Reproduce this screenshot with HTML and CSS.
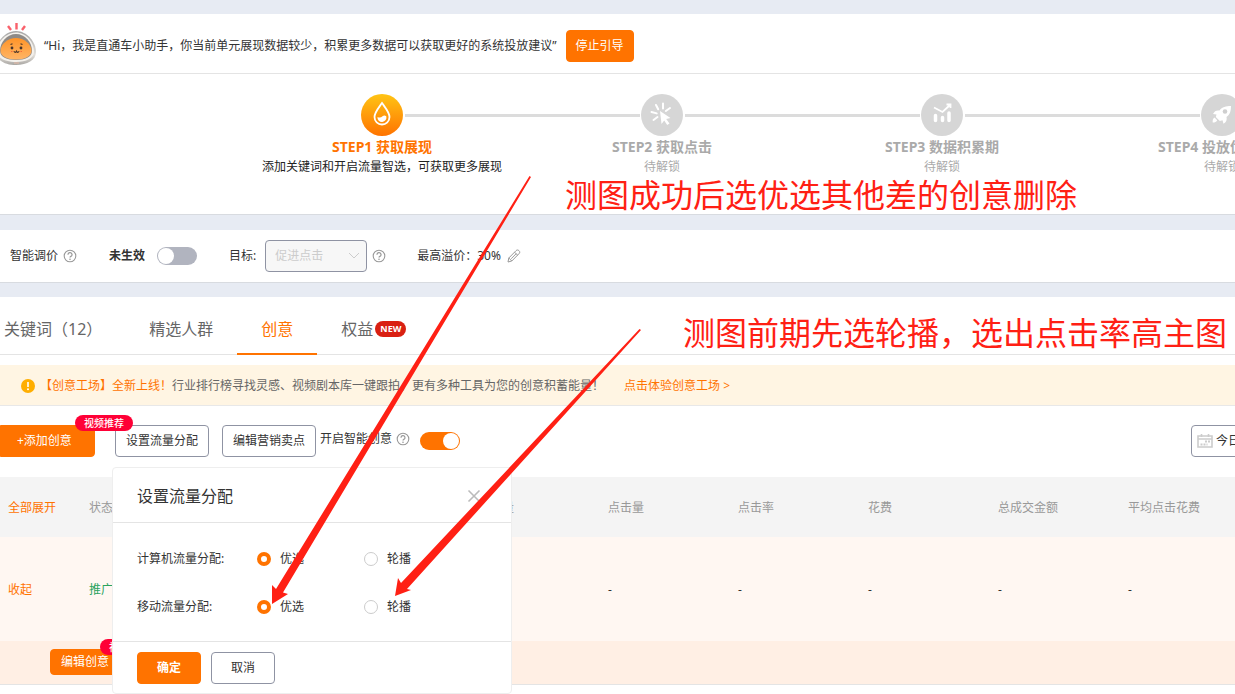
FILE: index.html
```
<!DOCTYPE html>
<html lang="zh-CN">
<head>
<meta charset="utf-8">
<title>创意 - 直通车</title>
<link rel="stylesheet" href="styles.css">
</head>
<body>
<svg class="symbols" aria-hidden="true">
  <symbol id="help" viewBox="0 0 14 14">
    <circle cx="7" cy="7" r="5.8" fill="none" stroke="currentColor" stroke-width="1.1"/>
    <path d="M5 5.7a2 2 0 1 1 2.9 1.7c-.6.3-.9.6-.9 1.2" fill="none" stroke="currentColor" stroke-width="1.2"/>
    <circle cx="7" cy="10.2" r=".8" fill="currentColor"/>
  </symbol>
</svg>
<main class="page">
  <section class="card">
    <div class="helper">
      <svg class="mascot" viewBox="0 0 36 44" aria-hidden="true">
        <defs>
          <linearGradient id="shell" x1="0" y1="0" x2="0" y2="1"><stop offset="0" stop-color="#a5a5a5"/><stop offset=".7" stop-color="#e4e0da"/><stop offset="1" stop-color="#aaa8a4"/></linearGradient>
          <linearGradient id="face" x1="0" y1="0" x2="0" y2="1"><stop offset="0" stop-color="#ff9428"/><stop offset="1" stop-color="#ffb566"/></linearGradient>
        </defs>
        <path d="M8 4l3 4M16.500 1v6.500M25 4l-3 4" stroke="#f9616b" stroke-width="2.400" fill="none"/>
        <path d="M16 9C27 9 36 20 36 30c0 8-9 13-20 13S-4 38-4 30C-4 20 5 9 16 9z" fill="url(#shell)"/>
        <path d="M16 10.500C26 10.500 34 20 34 30c0 6-8 10-18 10S-3 36-3 30c0-10 9-19.500 19-19.500z" fill="#f4f1ec"/>
        <path d="M16 12c9 0 16 8 16 17 0 6-7 9-16 9S0 35 0 29c0-9 7-17 16-17z" fill="#8e8a87"/>
        <path d="M16 16c8 0 15.500 6 15.500 13 0 5-7 8.500-15.500 8.500S.5 34 .5 29C.5 22 8 16 16 16z" fill="url(#face)"/>
        <g fill="#46332a"><circle cx="12" cy="26" r="1.400"/><circle cx="21" cy="26" r="1.400"/></g>
        <path d="M10.500 22.500l2-.8M20.500 21.700l2 .8M14 29c.4 2 2 1.500 2.500.2.500 1.300 2.100 1.800 2.500-.2" fill="none" stroke="#46332a" stroke-width="1.100"/>
        <path d="M11 29.500h1.500M20.500 29.500H22" stroke="#f3693f" stroke-width="1.200"/>
        <path d="M14 41h5" stroke="#e7b9a3" stroke-width="1"/>
      </svg>
      <p class="helper-text">“Hi，我是直通车小助手，你当前单元展现数据较少，积累更多数据可以获取更好的系统投放建议”</p>
      <button class="btn btn-primary btn-stop" type="button">停止引导</button>
    </div>
    <ol class="steps">
      <li class="step step-active">
        <span class="step-icon"><svg viewBox="0 0 42 42" fill="none" stroke="#fff" aria-hidden="true"><path d="M21 9c3.500 5 7.500 9.500 7.500 14a7.500 7.500 0 0 1-15 0c0-4.500 4-9 7.500-14z" stroke-width="1.800"/><path d="M16.500 23c2 1 3.500.7 5-.7 1.300-1 2.500-1 3.800 0a4.500 4.500 0 1 1-8.800.7z" fill="#fff" stroke="none"/></svg></span>
        <strong class="step-title">STEP1 获取展现</strong>
        <span class="step-desc">添加关键词和开启流量智选，可获取更多展现</span>
      </li>
      <li class="step">
        <span class="step-icon"><svg viewBox="0 0 42 42" aria-hidden="true"><path d="M22 9.500v5M29 14l-4.200 3M15 11l2.200 4.300M10.500 18l5.200 1.400M12.500 26l4-3" stroke="#fff" stroke-width="2" stroke-linecap="round"/><path d="M19 17l10.500 7-4.300 1 3.300 4.500-2.300 1.500-3-4.500-2.700 3.500z" fill="#fff"/></svg></span>
        <strong class="step-title">STEP2 获取点击</strong>
        <span class="step-desc">待解锁</span>
      </li>
      <li class="step">
        <span class="step-icon"><svg viewBox="0 0 42 42" fill="none" stroke="#fff" aria-hidden="true"><path d="M14.500 21.500v5M21.500 23.500v3M28 19v7.500" stroke-width="3.500" stroke-linecap="round"/><path d="M13 13.500l8.500 4.500 7.500-7M25.500 10.500h4v3.500" stroke-width="1.800"/></svg></span>
        <strong class="step-title">STEP3 数据积累期</strong>
        <span class="step-desc">待解锁</span>
      </li>
      <li class="step">
        <span class="step-icon"><svg viewBox="0 0 42 42" aria-hidden="true"><path d="M30 12c-5 0-9 1-11.500 4.500-3-.5-5 .5-6.500 3.500l3.500.500-.7 2.500 4 4 2.700-.7 1 3.500c2.700-1.600 3.700-3.800 3-6.800C29 20.500 30 17 30 12z" fill="#fff"/><path d="M13.500 23.500c-1.800 1-2 3-1.800 5 2 0 4-.5 4.500-2.300z" fill="#fff"/><circle cx="24" cy="17.500" r="2.300" fill="#cfcfcf"/></svg></span>
        <strong class="step-title">STEP4 投放优化阶段</strong>
        <span class="step-desc">待解锁</span>
      </li>
    </ol>
  </section>

  <section class="card settings">
    <span class="setting setting-bid">智能调价 <svg class="help"><use href="#help"/></svg></span>
    <label class="setting setting-state"><strong>未生效</strong><input class="switch" type="checkbox" role="switch"></label>
    <div class="setting setting-goal">
      <label class="goal-label" for="goal">目标:</label>
      <span class="select-wrap">
        <select id="goal" class="select" disabled><option>促进点击</option></select>
        <svg class="chevron" viewBox="0 0 12 7" aria-hidden="true"><path d="M1 1l5 5 5-5" fill="none" stroke="currentColor"/></svg>
      </span>
      <svg class="help"><use href="#help"/></svg>
    </div>
    <div class="setting">最高溢价：30%
      <button class="icon-btn" type="button" aria-label="编辑"><svg viewBox="0 0 14 14" fill="none" stroke="currentColor" aria-hidden="true"><path d="M1 13l.8-4L9 1.700c1-1 2-.9 3 0s1 2 0 3L4.800 12zM1.800 9l3 3M7.600 3.200l3 3M4.200 9.700l5-5"/></svg></button>
    </div>
  </section>

  <section class="card content">
    <nav class="tabs">
      <a class="tab" href="#keywords">关键词（12）</a>
      <a class="tab" href="#audience">精选人群</a>
      <a class="tab tab-active" href="#creative">创意</a>
      <a class="tab" href="#benefit">权益<span class="tag-new">NEW</span></a>
    </nav>
    <div class="notice">
      <svg class="notice-icon" viewBox="0 0 14 14" aria-hidden="true"><circle cx="7" cy="7" r="7" fill="#ffae00"/><path d="M7 3v5" stroke="#fff" stroke-width="1.600"/><circle cx="7" cy="10.200" r="1" fill="#fff"/></svg>
      <p class="notice-text"><span class="accent">【创意工场】全新上线！</span>行业排行榜寻找灵感、视频剧本库一键跟拍，更有多种工具为您的创意积蓄能量！</p>
      <a class="accent notice-link" href="#workshop">点击体验创意工场 &gt;</a>
    </div>
    <div class="workspace">
      <div class="toolbar">
        <div class="add-wrap">
          <button class="btn btn-primary btn-add" type="button">+添加创意</button>
          <span class="badge">视频推荐</span>
        </div>
        <button class="btn btn-outline btn-flow" type="button">设置流量分配</button>
        <button class="btn btn-outline" type="button">编辑营销卖点</button>
        <label class="smart"><span class="smart-label">开启智能创意 <svg class="help"><use href="#help"/></svg></span><input class="switch" type="checkbox" role="switch" checked></label>
        <button class="btn btn-outline btn-date" type="button"><svg viewBox="0 0 16 14" fill="none" stroke="#ccc" aria-hidden="true"><path d="M1 2h14v11H1zM1 5h14M4.500 0v3M11.500 0v3" stroke-width="1.600"/><path d="M8 7.500h5M3.500 10.500h7" stroke-width="2" stroke-dasharray="2 1"/></svg>今日</button>
      </div>
      <table class="table">
        <colgroup><col class="col-toggle"><col class="col-state"><col class="col-num"><col class="col-num"><col class="col-num"><col class="col-num"><col class="col-num"><col></colgroup>
        <thead>
          <tr><th><a class="accent" href="#expand">全部展开</a></th><th>状态</th><th>展现量</th><th>点击量</th><th>点击率</th><th>花费</th><th>总成交金额</th><th>平均点击花费</th></tr>
        </thead>
        <tbody>
          <tr class="row-main"><td><a class="accent" href="#collapse">收起</a></td><td class="running">推广中</td><td>-</td><td>-</td><td>-</td><td>-</td><td>-</td><td>-</td></tr>
          <tr class="row-edit"><td colspan="8"><span class="edit-wrap"><button class="btn btn-primary btn-edit" type="button">编辑创意</button><span class="badge">视频推荐</span></span></td></tr>
        </tbody>
      </table>
      <form class="dialog" role="dialog" aria-labelledby="dialog-title">
        <header class="dialog-head">
          <h2 class="dialog-title" id="dialog-title">设置流量分配</h2>
          <button class="icon-btn close" type="button" aria-label="关闭"><svg viewBox="0 0 14 14" aria-hidden="true"><path d="M1.500 1.500l11 11M12.500 1.500l-11 11" stroke="currentColor" stroke-width="1.600"/></svg></button>
        </header>
        <div class="dialog-body">
          <div class="field" role="radiogroup" aria-labelledby="pc">
            <span class="field-label" id="pc">计算机流量分配:</span>
            <label class="option"><input class="radio" type="radio" name="pc" checked>优选</label>
            <label class="option"><input class="radio" type="radio" name="pc">轮播</label>
          </div>
          <div class="field" role="radiogroup" aria-labelledby="mobile">
            <span class="field-label" id="mobile">移动流量分配:</span>
            <label class="option"><input class="radio" type="radio" name="mobile" checked>优选</label>
            <label class="option"><input class="radio" type="radio" name="mobile">轮播</label>
          </div>
        </div>
        <footer class="dialog-foot">
          <button class="btn btn-primary btn-ok" type="button">确定</button>
          <button class="btn btn-outline btn-cancel" type="button">取消</button>
        </footer>
      </form>
    </div>
  </section>

  <svg class="arrows" viewBox="0 0 370 430" aria-hidden="true">
    <path d="M257.500 0L4 413 0 409V428L16 418 11 416.500 259 1z"/>
    <path d="M367.500 153L129 407 126 402 123 420 139 414 135 413 369 154z"/>
  </svg>
  <p class="mark mark-late">测图成功后选优选其他差的创意删除</p>
  <p class="mark mark-early">测图前期先选轮播，选出点击率高主图</p>
</main>
</body>
</html>
```
FILE: styles.css
```
* { box-sizing: border-box; }

body {
  margin: 0;
  background: #e7ebf3;
  color: #333;
  font: 12px/20px "Noto Sans", "Noto Sans CJK SC", sans-serif;
}

p, h2, ol { margin: 0; padding: 0; }
a { color: inherit; text-decoration: none; }
button, select { font: inherit; color: inherit; }
.symbols { position: absolute; width: 0; height: 0; }

.page {
  position: relative;
  display: flex;
  flex-direction: column;
  min-height: 100vh;
  padding-top: 14px;
  overflow: hidden;
}

.card { background: #fff; border-bottom: 1px solid #d8dbe0; }
.accent { color: #ff7300; }

/* Buttons */
.btn {
  flex: none;
  height: 32px;
  padding: 0 10px;
  border: 1px solid #8f93a3;
  border-radius: 4px;
  background: #fff;
  white-space: nowrap;
}
.btn-primary { border-color: #ff7300; background: #ff7300; color: #fff; }
.icon-btn { display: block; padding: 0; border: 0; background: none; color: #999; }
.icon-btn svg { display: block; width: 14px; height: 14px; }
.help { display: block; width: 14px; height: 14px; color: #999; }

.switch {
  appearance: none;
  display: flex;
  width: 40px;
  height: 18px;
  margin: 0;
  padding: 1px;
  border-radius: 9px;
  background: #b1b4bf;
}
.switch::before { content: ""; width: 16px; height: 16px; border-radius: 50%; background: #fff; }
.switch:checked { justify-content: flex-end; background: #ff7300; }

.badge {
  position: absolute;
  height: 16px;
  padding: 0 9px;
  border-radius: 8px;
  background: #ff0036;
  color: #fff;
  font-size: 10px;
  font-weight: 500;
  line-height: 16px;
  white-space: nowrap;
}

/* Assistant */
.helper {
  display: flex;
  align-items: center;
  height: 60px;
  padding-top: 4px;
  border-bottom: 1px solid #e4e4e4;
}
.mascot { flex: none; width: 36px; height: 44px; margin-bottom: 4px; }
.helper-text { margin-left: 8px; white-space: nowrap; }
.btn-stop { margin-left: 9px; padding: 0 9px; }

/* Steps */
.steps { display: flex; height: 140px; padding: 20px 0 0 242px; list-style: none; overflow: hidden; }
.step {
  position: relative;
  flex: 0 0 280px;
  display: flex;
  flex-direction: column;
  align-items: center;
  color: #aaa;
}
.step:not(:last-child)::after {
  content: "";
  position: absolute;
  top: 20px;
  left: 163px;
  width: 235px;
  height: 3px;
  background: #dcdcdc;
}
.step-icon { width: 42px; height: 42px; border-radius: 50%; background: #d6d6d6; }
.step-icon svg { display: block; }
.step-title { font-size: 14px; line-height: 22px; }
.step-desc { line-height: 18px; }
.step-active .step-icon { background: linear-gradient(#ffc414, #ff7300); }
.step-active .step-title { color: #ff7300; }
.step-active .step-desc { color: #222; }

/* Bid settings */
.settings { display: flex; align-items: center; height: 53px; margin: 15px 0 14px; padding: 0 10px; white-space: nowrap; }
.setting { display: flex; align-items: center; gap: 6px; }
.setting-bid { margin-right: 32px; gap: 5px; }
.setting-state { margin-right: 32px; gap: 12px; }
.setting-goal { margin-right: 31px; gap: 5px; }
.goal-label { margin-right: 4px; }
.select-wrap { position: relative; }
.select {
  appearance: none;
  display: block;
  width: 102px;
  height: 32px;
  padding: 0 9px;
  border: 1px solid #8f93a3;
  border-radius: 4px;
  background: #f7f7f7;
  color: #ccc;
  opacity: 1;
}
.chevron { position: absolute; top: 12px; right: 7px; width: 12px; height: 7px; color: #ccc; }

/* Tabs */
.content { flex: 1; border-bottom: 0; }
.tabs { display: flex; height: 58px; padding-left: 4px; border-bottom: 1px solid #e4e4e4; }
.tab {
  display: flex;
  align-items: center;
  height: 58px;
  padding: 8px 24px 0;
  border-bottom: 2px solid transparent;
  color: #666;
  font-size: 16px;
  line-height: 24px;
}
.tab:first-child { padding-left: 0; padding-right: 23px; }
.tab-active { border-color: #ff7300; color: #ff7300; }
.tag-new {
  margin-left: 2px;
  padding: 0 5px;
  border-radius: 8px;
  background: #d92012;
  color: #fff;
  font-size: 9px;
  font-weight: 700;
  line-height: 16px;
}

/* Notice */
.notice {
  display: flex;
  align-items: center;
  height: 41px;
  margin-top: 10px;
  padding: 1px 0 0 21px;
  border-bottom: 1px solid #e8e8e8;
  background: #fff5e3;
  color: #666;
  white-space: nowrap;
}
.notice-icon { flex: none; width: 14px; height: 14px; }
.notice-text { margin-left: 5px; }
.notice-link { margin-left: 20px; }

/* Toolbar */
.workspace { position: relative; }
.toolbar { display: flex; align-items: center; padding: 19px 0 20px; }
.add-wrap { position: relative; flex: none; }
.btn-add { width: 95px; padding: 0 16px; border-radius: 0 4px 4px 0; text-align: left; }
.add-wrap .badge { top: -10px; left: 75px; }
.btn-flow { margin: 0 13px 0 20px; }
.smart { display: flex; gap: 10px; margin-left: 4px; white-space: nowrap; }
.smart-label { display: flex; align-items: center; gap: 4px; line-height: 14px; height: 14px; }
.btn-date {
  display: flex;
  align-items: center;
  gap: 3px;
  width: 64px;
  margin: 0 -20px 0 auto;
  padding: 0 5px;
}
.btn-date svg { flex: none; width: 16px; height: 14px; }

/* Table */
.table { width: 100%; min-width: 1260px; table-layout: fixed; border-collapse: collapse; text-align: left; }
.table th, .table td { padding: 2px 8px 0; font-weight: 400; }
.table th { height: 60px; background: #f4f4f4; color: #999; }
.col-toggle { width: 81px; }
.col-state { width: 389px; }
.col-num { width: 130px; }
.row-main td { height: 104px; background: #fff7f2; }
.table .running { color: #2ba35e; }
.table .row-edit td { height: 43px; padding: 0 50px; border-bottom: 1px solid #e4e4e4; background: #ffefe4; }
.edit-wrap { position: relative; display: inline-block; vertical-align: middle; }
.btn-edit { display: block; height: 26px; }
.edit-wrap .badge { top: -10px; left: 50px; }

/* Traffic dialog */
.dialog {
  position: absolute;
  top: 61px;
  left: 112px;
  width: 400px;
  border: 1px solid #eee;
  border-radius: 4px;
  background: #fff;
}
.dialog-head {
  display: flex;
  align-items: center;
  justify-content: space-between;
  height: 55px;
  padding: 2px 30px 0 24px;
  border-bottom: 1px solid #e4e4e4;
}
.dialog-title { font-size: 16px; font-weight: 400; line-height: 24px; }
.close { color: #bbb; }
.dialog-body { display: flex; flex-direction: column; gap: 24px; padding: 24px 24px 22px; }
.field { display: flex; line-height: 24px; }
.field-label { width: 120px; }
.option { display: flex; align-items: center; gap: 9px; width: 107px; }
.radio {
  appearance: none;
  width: 14px;
  height: 14px;
  margin: 0;
  border: 1px solid #ccc;
  border-radius: 50%;
  background: #fff;
}
.radio:checked { border: 4px solid #ff7300; }
.dialog-foot { display: flex; gap: 10px; padding: 10px 24px 9px; border-top: 1px solid #e4e4e4; }
.btn-ok, .btn-cancel { width: 64px; }
.btn-ok { font-weight: 700; }

/* Annotations */
.arrows { position: absolute; top: 176px; left: 272px; width: 370px; height: 430px; fill: #ff2014; pointer-events: none; }
.mark { position: absolute; color: #ff2014; font-size: 32px; line-height: 40px; white-space: nowrap; }
.mark-late { top: 175px; left: 565px; }
.mark-early { top: 313px; left: 683px; }
```
